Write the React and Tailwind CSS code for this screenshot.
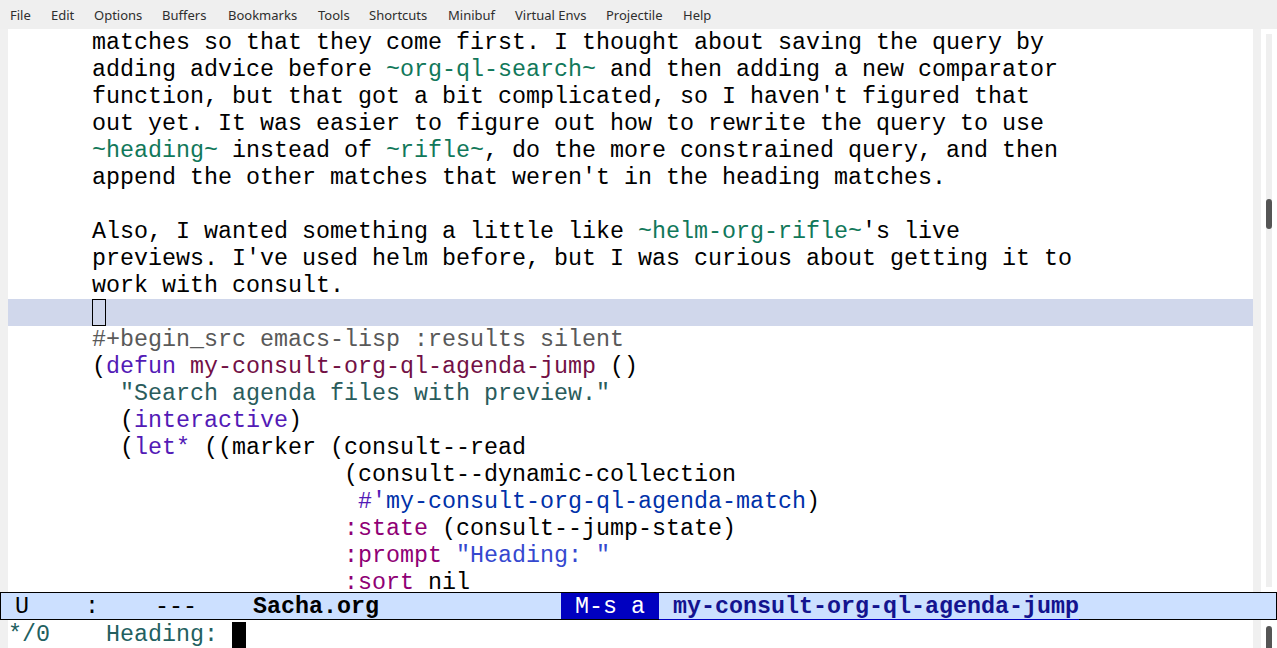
import React from "react";

const MONO = { fontFamily: '"Liberation Mono", "DejaVu Sans Mono", monospace' };

const C = {
  code: "text-[#11785a]",
  meta: "text-[#595959]",
  kw: "text-[#531ab6]",
  fn: "text-[#721045]",
  doc: "text-[#2a5c5c]",
  builtin: "text-[#8f0075]",
  str: "text-[#3548cf]",
  ref: "text-[#0031a9]",
};

function S({ c, children }) {
  return <span className={c}>{children}</span>;
}

const lines = [
  ["matches so that they come first. I thought about saving the query by"],
  ["adding advice before ", <S key="a" c={C.code}>~org-ql-search~</S>, " and then adding a new comparator"],
  ["function, but that got a bit complicated, so I haven't figured that"],
  ["out yet. It was easier to figure out how to rewrite the query to use"],
  [<S key="a" c={C.code}>~heading~</S>, " instead of ", <S key="b" c={C.code}>~rifle~</S>, ", do the more constrained query, and then"],
  ["append the other matches that weren't in the heading matches."],
  [""],
  ["Also, I wanted something a little like ", <S key="a" c={C.code}>~helm-org-rifle~</S>, "'s live"],
  ["previews. I've used helm before, but I was curious about getting it to"],
  ["work with consult."],
  "CURSOR",
  [<S key="a" c={C.meta}>#+begin_src emacs-lisp :results silent</S>],
  ["(", <S key="a" c={C.kw}>defun</S>, " ", <S key="b" c={C.fn}>my-consult-org-ql-agenda-jump</S>, " ()"],
  ["  ", <S key="a" c={C.doc}>"Search agenda files with preview."</S>],
  ["  (", <S key="a" c={C.kw}>interactive</S>, ")"],
  ["  (", <S key="a" c={C.kw}>let*</S>, " ((marker (consult--read"],
  ["                  (consult--dynamic-collection"],
  ["                   ", <S key="a" c={C.kw}>#'</S>, <S key="b" c={C.ref}>my-consult-org-ql-agenda-match</S>, ")"],
  ["                  ", <S key="a" c={C.builtin}>:state</S>, " (consult--jump-state)"],
  ["                  ", <S key="a" c={C.builtin}>:prompt</S>, " ", <S key="b" c={C.str}>"Heading: "</S>],
  ["                  ", <S key="a" c={C.builtin}>:sort</S>, " nil"],
];

const menu = [
  ["File", "w-[41px]"],
  ["Edit", "w-[43px]"],
  ["Options", "w-[68px]"],
  ["Buffers", "w-[66px]"],
  ["Bookmarks", "w-[90px]"],
  ["Tools", "w-[51px]"],
  ["Shortcuts", "w-[79px]"],
  ["Minibuf", "w-[67px]"],
  ["Virtual Envs", "w-[91px]"],
  ["Projectile", "w-[77px]"],
  ["Help", "w-[50px]"],
];

export default function App() {
  return (
    <div className="w-[1277px] h-[648px] overflow-hidden bg-white flex flex-col">
      {/* menu bar */}
      <div
        className="h-[29px] shrink-0 bg-[#efefef] flex items-start pt-[2px] pl-[10px] text-[13px] text-[#2e2e2e]"
        style={{ fontFamily: '"Noto Sans", "Open Sans", sans-serif' }}
      >
        {menu.map(([t, w]) => (
          <div key={t} className={`${w} shrink-0 whitespace-nowrap leading-[27px]`}>
            {t}
          </div>
        ))}
      </div>

      {/* main window */}
      <div className="h-[563px] shrink-0 flex">
        <div className="w-[8px] shrink-0 bg-[#f0f0f0]" />
        <div className="w-[1245px] shrink-0 overflow-hidden text-[23.33px] text-black" style={MONO}>
          {lines.map((l, i) =>
            l === "CURSOR" ? (
              <div key={i} className="h-[27px] bg-[#d0d7eb] pl-[84px]">
                <div className="w-[14px] h-[27px] border border-black bg-[#d0d7eb]" />
              </div>
            ) : (
              <div key={i} className="h-[27px] whitespace-pre pl-[84px] pt-px">
                <div className="h-[26px] leading-[27px]">{l}</div>
              </div>
            )
          )}
        </div>
        <div className="w-[8px] shrink-0 bg-[#f0f0f0]" />
        <div className="w-[16px] shrink-0 pl-[5px] pt-[5px] pb-[5px]">
          <div className="w-[6px] h-full bg-[#efefef] pt-[165px]">
            <div className="w-[6px] h-[30px] rounded-full bg-[#555555]" />
          </div>
        </div>
      </div>

      {/* mode line */}
      <div
        className="h-[28px] shrink-0 border border-black bg-[#cce0ff] flex items-stretch text-[23.33px] text-black"
        style={MONO}
      >
        <span className="whitespace-pre leading-[28px]">{" U    :    ---    "}</span>
        <span className="whitespace-pre leading-[28px] font-bold">Sacha.org</span>
        <span className="whitespace-pre leading-[28px]">{"             "}</span>
        <span className="whitespace-pre leading-[28px] bg-[#0000c0] text-white">{" M-s a "}</span>
        <span className="whitespace-pre leading-[28px] -mb-px border-b border-[#0000c0] font-bold text-[#13138f]">
          {" my-consult-org-ql-agenda-jump"}
        </span>
      </div>

      {/* minibuffer */}
      <div className="h-[28px] shrink-0 flex">
        <div className="w-[8px] shrink-0 bg-[#f0f0f0]" />
        <div className="w-[1245px] shrink-0 flex text-[23.33px] text-[#235f5f]" style={MONO}>
          <span className="whitespace-pre leading-[30px]">{"*/0    Heading: "}</span>
          <div className="w-[14px] h-[26px] mt-[2px] bg-black" />
        </div>
        <div className="w-[8px] shrink-0 bg-[#f0f0f0]" />
        <div className="w-[16px] shrink-0 pl-[5px] pt-[6px]">
          <div className="w-[6px] h-[30px] rounded-full bg-[#555555]" />
        </div>
      </div>
    </div>
  );
}
